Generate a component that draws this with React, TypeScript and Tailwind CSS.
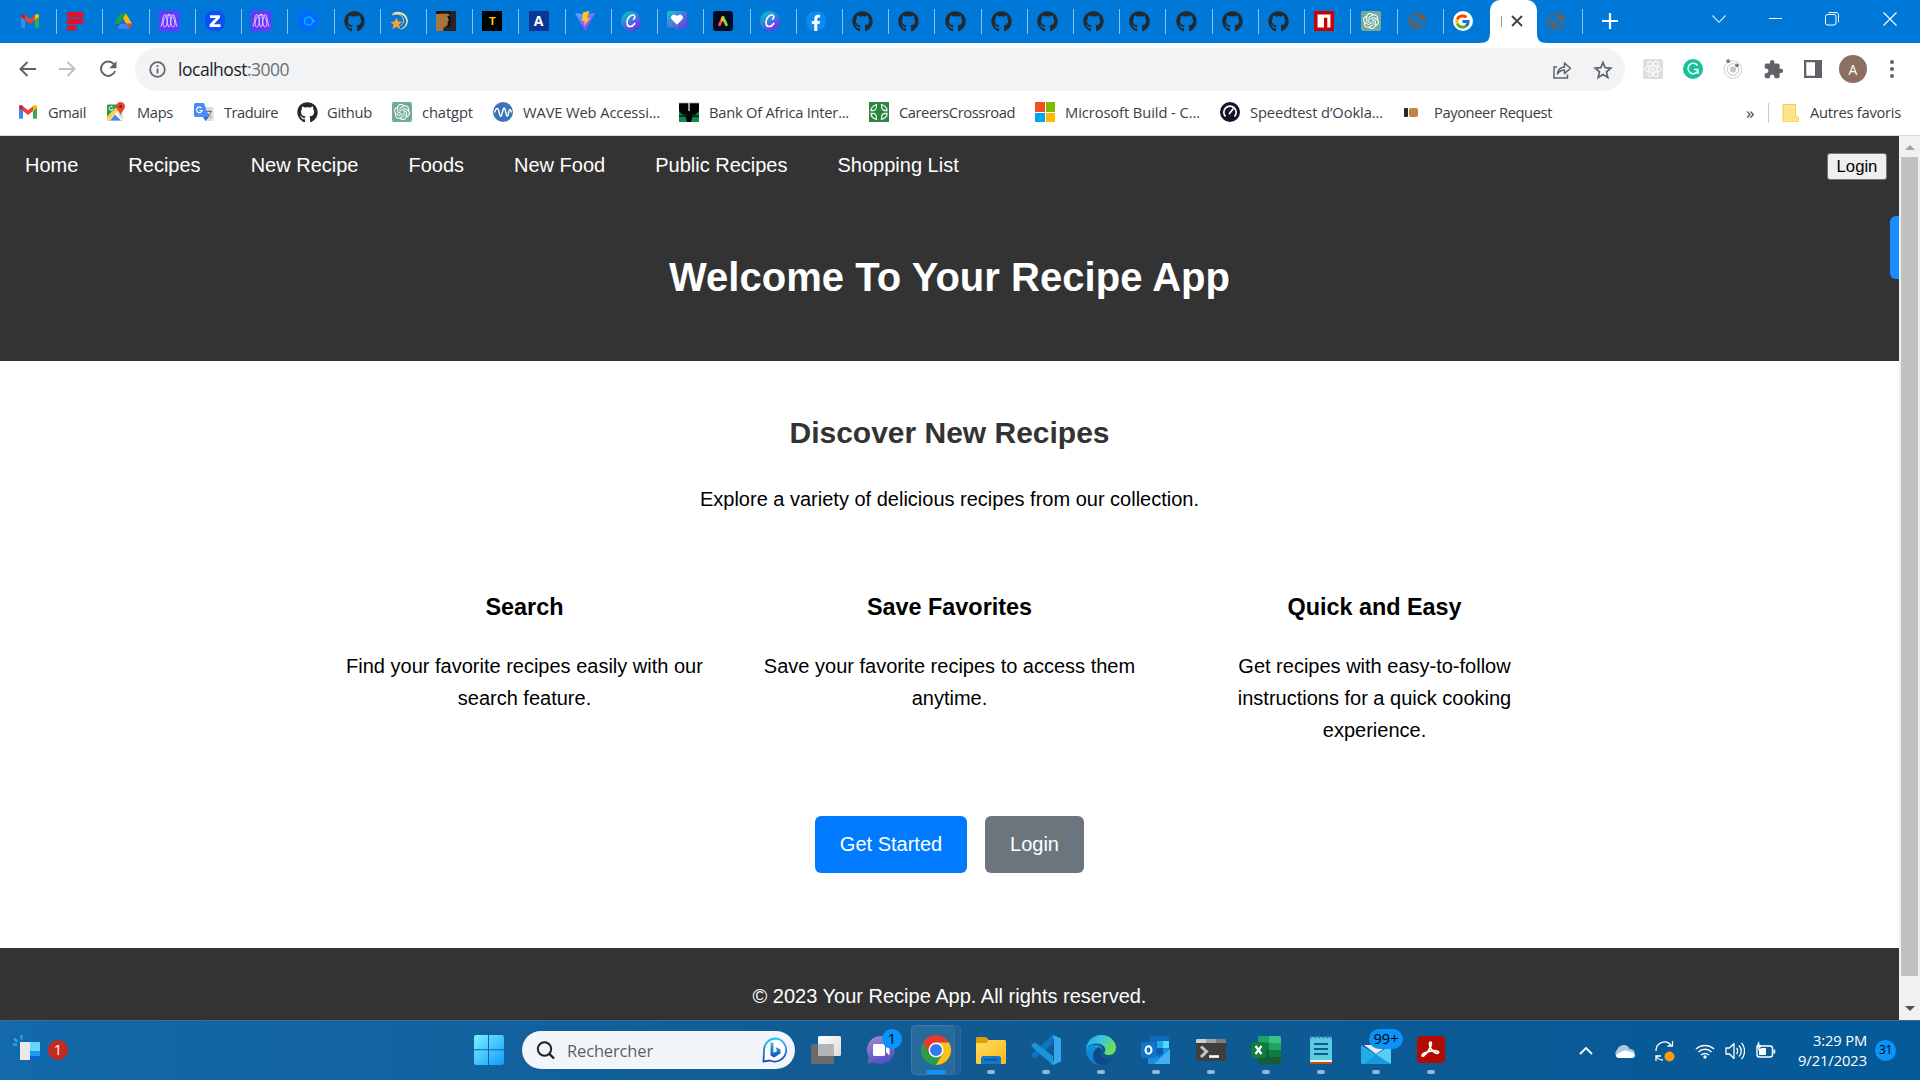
import React, { useLayoutEffect, useRef, useState } from "react";
import { FcGoogle } from "react-icons/fc";
import { SiOpenai } from "react-icons/si";
import { FaGithub } from "react-icons/fa";
import { MdExtension } from "react-icons/md";

/* Label whose letter spacing is adjusted so that it fills a given width. */
function Fit({ w, className = "", children }: { w: number; className?: string; children: string }) {
  const ref = useRef<HTMLSpanElement>(null);
  const [ls, setLs] = useState(0);
  useLayoutEffect(() => {
    if (ref.current) {
      const natural = ref.current.getBoundingClientRect().width;
      setLs((w - natural) / children.length);
    }
  }, []);
  return (
    <span ref={ref} className={"inline-block whitespace-pre " + className} style={{ letterSpacing: ls }}>
      {children}
    </span>
  );
}

const svg = "block w-5 h-5 shrink-0";

const Gmail = () => (
  <svg viewBox="0 0 20 20" className={svg}>
    <path d="M1 5v10.500c0 .8.500 1.200 1.200 1.200H5V9z" fill="#4285f4" />
    <path d="M19 5v10.500c0 .8-.5 1.200-1.200 1.200H15V9z" fill="#34a853" />
    <path d="M15 9l4-3.200V5c0-1.700-1.800-2.400-3-1.500L15 4.300z" fill="#fbbc04" />
    <path d="M5 9L1 5.800V5c0-1.700 1.800-2.400 3-1.500l1 .8z" fill="#c5221f" />
    <path d="M5 4.300l5 3.900 5-3.900V9l-5 3.900L5 9z" fill="#ea4335" />
  </svg>
);
const Feed = () => (
  <svg viewBox="0 0 20 20" className={svg}>
    <rect x="1" y="1" width="16.500" height="5.600" rx="1.200" fill="#e0112d" />
    <rect x="1" y="7.400" width="16.500" height="5.600" rx="1.200" fill="#e0112d" />
    <rect x="1" y="14" width="9.500" height="5.600" rx="1.200" fill="#e0112d" />
  </svg>
);
const Drive = () => (
  <svg viewBox="0 0 20 20" className={svg}>
    <path d="M7 2.500h6L10 7.800 4 17.800 1 12.800z" fill="#1e9e4e" />
    <path d="M13 2.500l6 10.300h-6L10 7.600z" fill="#ffba00" />
    <path d="M7 12.800h12l-3 5H4z" fill="#4285f4" />
    <path d="M13 12.800h6l-3 5z" fill="#ea4335" />
    <path d="M10 7.800l3 5H7z" fill="#0078d7" />
    <path d="M1 12.800L4 17.800l3-5z" fill="#1967d2" />
  </svg>
);
const Meta = () => (
  <svg viewBox="0 0 20 20" className={svg}>
    <rect width="20" height="20" fill="#6a35ff" />
    <g fill="none" stroke="#d9ccff" strokeWidth="1">
      <path d="M1.500 15.500C3.500 16 3.300 3.500 5.800 3.500S8 16 10 16s1.800-12.500 4.200-12.500 2.300 12.500 4.300 12" />
      <path d="M5.800 16c-3.500 0-1.500-12.500 4.200-12.500S17.700 16 14.200 16s-2-12.500-4.200-12.500S9.300 16 5.800 16z" />
    </g>
  </svg>
);
const Zed = () => (
  <svg viewBox="0 0 20 20" className={svg}>
    <rect width="20" height="20" rx="7.500" fill="#0b50f5" />
    <path d="M5 4.300h10v2.500L8.800 13.300H15.500V16H4.600v-2.600l6.200-6.400H5z" fill="#fff" />
  </svg>
);
const Clock = () => (
  <svg viewBox="0 0 20 20" className={svg}>
    <circle cx="10" cy="10" r="10" fill="#0069ff" />
    <path d="M14.200 7.500C12.500 5.700 9.500 5.500 7.700 7.200 6 9 6 11.300 7.700 12.900c1.800 1.700 4.800 1.500 6.500-.3M14.200 7.500v1.500l2.300 1-2.300 1v1.600" fill="none" stroke="#00c2ff" strokeWidth="1.300" />
  </svg>
);
const Git = () => <FaGithub className="block w-[21px] h-[21px] -mr-px shrink-0 text-[#24292f]" />;
const Dizzy = () => (
  <svg viewBox="0 0 20 20" className={svg}>
    <path d="M1.500 4C3.500-.3 11-.5 15 3.500c4.500 4.500 3.500 11-1.500 14-1.500.8-3 1-4 1 5-2 8-6.500 6.200-10.500C13.500 3 9 2 1.500 4z" fill="#f2dfa9" />
    <path d="M2.500 4C7 2 13 4 13.600 9c.3 2.500-.8 4.500-3 5.500" fill="none" stroke="#e8cc80" strokeWidth="1" />
    <path d="M6.500 6.500l1.600 4 4.400.3-3.400 2.800 1.300 4.700-4-2.500-4 2.500 1.200-4.700L.2 11l4.500-.4z" fill="#ff9d2e" />
  </svg>
);
const Face = () => (
  <svg viewBox="0 0 20 20" className={svg}>
    <rect width="20" height="20" fill="#2a2522" />
    <path d="M0 1.500h12l1.500 3-1.500 1 1 3.500-1.500 2 .5 4-4 1L7 20H0z" fill="#a87440" />
    <path d="M0 0h14v3l-4-.5-10 .5z" fill="#17100c" />
    <path d="M12 5l2 3-1 6-2 2" fill="none" stroke="#0f0b09" strokeWidth="2" />
  </svg>
);
const Tee = () => (
  <span className="flex w-5 h-5 items-center justify-center bg-black text-[#ffd200] font-['Liberation_Sans'] font-bold text-[11px] leading-none">T</span>
);
const Ay = () => (
  <span className="flex w-5 h-5 items-center justify-center bg-[#0c3594] text-white font-['Open_Sans'] font-bold text-[14px] leading-none">A</span>
);
const Vite = () => (
  <svg viewBox="0 0 20 20" className={svg}>
    <defs><linearGradient id="vt" x1="0" y1="0" x2=".7" y2="1"><stop stopColor="#41b8ff" /><stop offset=".7" stopColor="#a050fe" /><stop offset="1" stopColor="#bd34fe" /></linearGradient></defs>
    <path d="M0 2l10 1.500L20 2 10.300 20z" fill="url(#vt)" />
    <path d="M14.500 0L8 1.300 6.800 10h3L9 15l6-8-3 .3z" fill="#ffc51f" />
  </svg>
);
const Canva = () => (
  <svg viewBox="0 0 20 20" className={svg}>
    <defs><linearGradient id="cv" x1=".1" y1=".1" x2=".7" y2="1"><stop stopColor="#00c4cc" /><stop offset=".5" stopColor="#3f78df" /><stop offset="1" stopColor="#7d2ae8" /></linearGradient></defs>
    <circle cx="10" cy="10" r="10" fill="url(#cv)" />
    <path d="M12.500 8.300c2-1.300 1.700-4.300-.7-4.300C8 4 5.300 9.500 6.200 13c.8 3.500 5 3.500 7.500-.5" fill="none" stroke="#fff" strokeWidth="1.600" strokeLinecap="round" />
  </svg>
);
const Heart = () => (
  <svg viewBox="0 0 20 20" className={svg}>
    <defs><linearGradient id="hr" x1="0" y1="0" x2="1" y2="1"><stop stopColor="#17c3d0" /><stop offset=".5" stopColor="#4b78dd" /><stop offset="1" stopColor="#8a1fe8" /></linearGradient></defs>
    <path d="M2 0h16a2 2 0 0 1 2 2v12.500a2 2 0 0 1-2 2h-5L10 20l-3-3.500H2a2 2 0 0 1-2-2V2a2 2 0 0 1 2-2z" fill="url(#hr)" />
    <path d="M10 13.800L4.800 8.500C2.500 5.500 6 1.500 10 5c4-3.500 7.500.5 5.200 3.500z" fill="#fff" />
  </svg>
);
const Adobe = () => (
  <svg viewBox="0 0 20 20" className={svg}>
    <defs><linearGradient id="ad" gradientUnits="userSpaceOnUse" x1="5" y1="13" x2="15" y2="9"><stop stopColor="#ff2fd0" /><stop offset=".3" stopColor="#ff4a1c" /><stop offset=".55" stopColor="#ffd01c" /><stop offset=".8" stopColor="#3fd45a" /><stop offset="1" stopColor="#2176ff" /></linearGradient></defs>
    <rect width="20" height="20" rx="3" fill="#000b1d" />
    <path d="M6.500 13.800L10 6.200l3.500 7.600" fill="none" stroke="url(#ad)" strokeWidth="2.800" strokeLinejoin="round" strokeLinecap="round" />
  </svg>
);
const Facebook = () => (
  <svg viewBox="0 0 20 20" className={svg}>
    <circle cx="10" cy="10" r="10" fill="#0d8bf2" />
    <path d="M8.300 20v-7H5.800v-3h2.500V7.500C8.300 5 9.800 3.800 12 3.800c1 0 2 .2 2 .2v2.400h-1.200c-1.200 0-1.500.7-1.500 1.500V10H14l-.5 3h-2.200v7z" fill="#fff" />
  </svg>
);
const Npm = () => (
  <svg viewBox="0 0 20 20" className={svg}>
    <rect width="20" height="20" fill="#c00" />
    <path d="M3.500 3.500h13v13h-3.200V6.800H10v9.700H3.500z" fill="#fff" />
  </svg>
);
const Gpt = () => (
  <span className="flex w-5 h-5 items-center justify-center rounded-[2px] bg-[#74aa9c] text-white"><SiOpenai className="w-4 h-4" /></span>
);
const Globe = () => (
  <svg viewBox="0 0 20 20" className={svg}>
    <circle cx="10" cy="10" r="8" fill="none" stroke="#5f6368" strokeWidth="1.700" />
    <path d="M2.500 8c2 2 4.500 1 5.500 2.500s4 1 4 3-2.500 2.500-2.800 5C6 17.500 7.500 15 6 13.500S2 12 2 10zM10 2c-1 2 1.500 2 .5 3.500S9 8 11 8.500s2 2 3.500 2 2-1 3.500 0C18.500 5 15 2 10 2z" fill="#5f6368" />
  </svg>
);
const GWhite = () => (
  <span className="flex w-5 h-5 items-center justify-center rounded-full bg-white"><FcGoogle className="w-[17px] h-[17px]" /></span>
);

const tabs = [
  Gmail, Feed, Drive, Meta, Zed, Meta, Clock, Git, Dizzy, Face, Tee, Ay, Vite, Canva, Heart, Adobe, Canva, Facebook,
  Git, Git, Git, Git, Git, Git, Git, Git, Git, Git, Npm, Gpt, Globe, GWhite,
];

function TabStrip() {
  return (
    <div className="flex h-[43px] bg-[#0078d7] pl-[11px]">
      {tabs.map((Icon, i) => (
        <div key={i} className="flex w-[46.220px] shrink-0 items-center pb-px pl-[9.200px]">
          <Icon />
          {i < 31 && <span className="ml-auto mt-px w-px h-[25px] bg-[#8cc3ee]" />}
        </div>
      ))}
      <div className="relative flex w-[47px] shrink-0 items-center rounded-t-[10px] bg-white pb-px">
        <svg viewBox="0 0 10 10" className="absolute -left-[10px] bottom-0 w-[10px] h-[10px]"><path d="M10 0v10H0C7 10 10 7 10 0z" fill="#fff" /></svg>
        <svg viewBox="0 0 10 10" className="absolute -right-[10px] bottom-0 w-[10px] h-[10px]"><path d="M0 0v10h10C3 10 0 7 0 0z" fill="#fff" /></svg>
        <span className="ml-[11px] w-px h-[11px] bg-[#9a9a9a]" />
        <svg viewBox="0 0 12 12" className="ml-[9px] w-3 h-3"><path d="M1 1l10 10M11 1L1 11" stroke="#3c4043" strokeWidth="1.800" /></svg>
      </div>
      <div className="flex w-[46px] shrink-0 items-center pb-px pl-[9px]">
        <Globe />
        <span className="ml-auto w-px h-[25px] bg-[#8cc3ee]" />
      </div>
      <svg viewBox="0 0 16 16" className="ml-[19px] mt-[13px] w-4 h-4"><path d="M8 0v16M0 8h16" stroke="#fff" strokeWidth="2.200" /></svg>
      <svg viewBox="0 0 14 8" className="ml-[94px] mt-[15px] w-[14px] h-2"><path d="M.5.5L7 7.300 13.500.5" fill="none" stroke="#d8eafa" strokeWidth="1.100" /></svg>
      <span className="ml-[43px] mt-[18px] w-[13px] h-px bg-white" />
      <svg viewBox="0 0 14 14" className="ml-[43px] mt-[12px] w-[14px] h-[14px]"><rect x=".5" y="2.500" width="10.500" height="10.500" rx="2" fill="none" stroke="#fff" /><path d="M3.500.6H11c1.500 0 2.500 1 2.500 2.500v7" fill="none" stroke="#fff" /></svg>
      <svg viewBox="0 0 14 14" className="ml-[44px] mt-[12px] w-[14px] h-[14px]"><path d="M.5.5l13 13M13.500.5l-13 13" stroke="#fff" strokeWidth="1.100" /></svg>
    </div>
  );
}

const Atom = () => (
  <svg viewBox="0 0 20 20" className={svg}>
    <rect width="20" height="20" rx="2" fill="#dedede" />
    <g fill="none" stroke="#fff" strokeWidth=".9">
      <ellipse cx="10" cy="10" rx="8.500" ry="3.300" />
      <ellipse cx="10" cy="10" rx="8.500" ry="3.300" transform="rotate(60 10 10)" />
      <ellipse cx="10" cy="10" rx="8.500" ry="3.300" transform="rotate(120 10 10)" />
    </g>
    <circle cx="10" cy="10" r="1.500" fill="#fff" />
  </svg>
);

function Toolbar() {
  return (
    <div className="flex h-[53px] items-center font-['Open_Sans']">
      <svg viewBox="0 0 17 16" className="ml-[19px] -mt-[2px] w-[17px] h-4"><path d="M17 8H2M8.500 1L1.500 8l7 7" fill="none" stroke="#5f6368" strokeWidth="2" /></svg>
      <svg viewBox="0 0 17 16" className="ml-[23px] -mt-[2px] w-[17px] h-4"><path d="M0 8h15M8.500 1l7 7-7 7" fill="none" stroke="#bdc1c6" strokeWidth="2" /></svg>
      <svg viewBox="0 0 18 18" className="ml-[23px] -mt-px w-[18px] h-[18px]"><path d="M14.800 4.200A7.200 7.200 0 1 0 16 11" fill="none" stroke="#5f6368" strokeWidth="2" /><path d="M17.500 1v7.300h-7.300z" fill="#5f6368" /></svg>
      <div className="ml-[18px] flex h-[43px] w-[1490px] shrink-0 items-center rounded-full bg-[#f1f3f4] pl-[14px]">
        <svg viewBox="0 0 17 17" className="w-[17px] h-[17px]"><circle cx="8.500" cy="8.500" r="7.300" fill="none" stroke="#5f6368" strokeWidth="1.700" /><path d="M8.500 7.500v5M8.500 4.200v1.900" stroke="#5f6368" strokeWidth="1.800" /></svg>
        <Fit w={69} className="ml-[12px] text-[17.500px] text-[#202124]">localhost</Fit>
        <Fit w={42} className="text-[17.500px] text-[#6b6f74]">:3000</Fit>
        <svg viewBox="0 0 19 18" className="ml-auto w-[19px] h-[18px]"><path d="M4 6H1v11h13.500v-3.500" fill="none" stroke="#5f6368" strokeWidth="1.500" /><path d="M4.500 13c.3-4.500 3-6.700 7-7V2l6 5.300-6 5.300V9c-3.500 0-5.500 1.500-7 4z" fill="none" stroke="#5f6368" strokeWidth="1.500" strokeLinejoin="round" /></svg>
        <svg viewBox="0 0 20 20" className="ml-[21px] mr-[12px] w-5 h-5"><path d="M10 2.500l2.200 5.200 5.600.5-4.300 3.700 1.300 5.500L10 14.500l-4.800 2.900 1.300-5.500-4.300-3.700 5.600-.5z" fill="none" stroke="#5f6368" strokeWidth="1.700" /></svg>
      </div>
      <div className="-mt-px flex grow items-center pl-[18px]">
        <Atom />
        <span className="ml-5 flex w-5 h-5 items-center justify-center rounded-full bg-[#15c39a]">
          <svg viewBox="0 0 14 14" className="w-[14px] h-[14px]"><path d="M11.500 3.500A5.200 5.200 0 1 0 12 8.500M12.500 7.500H8M12 7.500V12" fill="none" stroke="#fff" strokeWidth="1.500" /></svg>
        </span>
        <svg viewBox="0 0 20 20" className="ml-5 w-5 h-5"><circle cx="10" cy="10.500" r="8.800" fill="none" stroke="#cfcfcf" /><circle cx="10" cy="10.500" r="5.800" fill="none" stroke="#c4c4c4" /><circle cx="10" cy="10.500" r="3" fill="#c4c4c4" /><circle cx="5.200" cy="2.200" r="1.900" fill="#777" /><circle cx="14" cy="6.300" r="1.900" fill="#777" /></svg>
        <MdExtension className="ml-[20px] w-[21px] h-[21px] text-[#5f6368]" />
        <svg viewBox="0 0 18 18" className="ml-5 w-[18px] h-[18px]"><path d="M0 0h18v18H0zM2.300 2.300v13.400h8.700V2.300z" fill="#5f6368" fillRule="evenodd" /></svg>
        <span className="ml-[17px] flex w-[28px] h-[28px] items-center justify-center rounded-full bg-[#8d6e63] text-white text-[14px]">A</span>
        <span className="ml-[23px] flex flex-col gap-[3px]">
          <i className="w-1 h-1 rounded-full bg-[#5f6368]" /><i className="w-1 h-1 rounded-full bg-[#5f6368]" /><i className="w-1 h-1 rounded-full bg-[#5f6368]" />
        </span>
      </div>
    </div>
  );
}

const MapsI = () => (
  <svg viewBox="0 0 20 20" className={svg}>
    <rect x="0" y="2.500" width="16" height="16" rx="1" fill="#2a9d57" />
    <path d="M0 17.500L14 3.500l2 3.500v11.500H1z" fill="#fff" />
    <path d="M0 14.500L11.500 3l2.500 2.500L2 18.500H0z" fill="#ffd04c" />
    <path d="M3 18.500l5-6 6 6z" fill="#4285f4" />
    <path d="M9.500 11.500l6.500 6.500V8z" fill="#dedede" />
    <path d="M13.500 0A4.500 4.500 0 0 1 18 4.500c0 3-3.500 4.500-4.500 9-1-4.500-4.500-6-4.500-9A4.500 4.500 0 0 1 13.500 0z" fill="#ea4335" />
    <circle cx="13.500" cy="4.500" r="1.500" fill="#8b1a14" />
    <path d="M5.500 5A2 2 0 1 0 6 7.200H4.300" fill="none" stroke="#fff" strokeWidth=".9" />
  </svg>
);
const Traduire = () => (
  <svg viewBox="0 0 20 20" className={svg}>
    <path d="M7 5h11a1.500 1.500 0 0 1 1.500 1.500v11A1.500 1.500 0 0 1 18 19h-6z" fill="#dcdcdc" />
    <path d="M1.500 1H10l5 14H1.500A1.500 1.500 0 0 1 0 13.500v-11A1.500 1.500 0 0 1 1.500 1z" fill="#4c8bf5" />
    <path d="M9 15h6l-3.500 4z" fill="#3367d6" />
    <path d="M7.500 6A2.800 2.800 0 1 0 8.100 8.500H5.500" fill="none" stroke="#fff" strokeWidth="1.200" />
    <path d="M12.500 9.500H18M15.300 8v1.500M17 9.500c-.5 2-2 4-3 5M14 11.500c1 2 2 3 3.500 4" fill="none" stroke="#607988" />
  </svg>
);
const Wave = () => (
  <svg viewBox="0 0 20 20" className={svg}>
    <circle cx="10" cy="10" r="10" fill="#3f73b7" />
    <path d="M1.500 10.500C3 5.500 4.700 5.500 5.700 8.500l1.200 4.500c.5 1.600 1.200 1.600 1.700 0l1.700-6c.5-1.500 1.200-1.500 1.700 0l1.500 6c.5 1.500 1.100 1.500 1.600 0l.6-3c.8-3.500 1.800-3.500 2.800.5" fill="none" stroke="#fff" strokeWidth="1.400" />
  </svg>
);
const Boa = () => (
  <svg viewBox="0 0 20 20" className={svg}>
    <rect width="20" height="20" fill="#050505" />
    <path d="M0 0h20v1.200H0zM9.300 1.200h1.400V9H9.300z" fill="#e0e0e0" />
    <path d="M0 4.500c1 5 3.500 8 8 9H0zM20 4.500c-1 5-3.500 8-8 9h8zM0 14.800h6.500L8 20H0zM13.500 14.800H20V20h-8z" fill="#0f8a4d" />
    <path d="M0 4.500c1 4 2.500 6 5 7.500M20 4.500c-1 4-2.500 6-5 7.500" fill="none" stroke="#050505" strokeWidth="3" />
  </svg>
);
const Careers = () => (
  <svg viewBox="0 0 20 20" className={svg}>
    <rect width="20" height="20" fill="#2b8540" />
    <path d="M7.500 2.500C3 4 2 7 2 8.500h2.500C6.500 8.500 7.500 7 7.500 2.500zM7.500 17.500C3 16 2 13 2 11.500h2.500c2 0 3 1.500 3 6zM12.500 2.500c4.500 1.500 5.500 4.500 5.500 6h-2.500c-2 0-3-1.500-3-6zM12.500 17.500c4.500-1.500 5.500-4.500 5.500-6h-2.500c-2 0-3 1.500-3 6z" fill="none" stroke="#e8f5ea" strokeWidth="1.300" />
  </svg>
);
const Ms = () => (
  <span className="grid w-5 h-5 grid-cols-2 gap-px">
    <i className="bg-[#f25022]" /><i className="bg-[#7fba00]" /><i className="bg-[#00a4ef]" /><i className="bg-[#ffb900]" />
  </span>
);
const Speed = () => (
  <svg viewBox="0 0 20 20" className={svg}>
    <circle cx="10" cy="10" r="10" fill="#141526" />
    <path d="M5.500 14.500a6.200 6.200 0 1 1 9 0" fill="none" stroke="#fff" strokeWidth="1.700" />
    <path d="M9.500 11.500L13 7" stroke="#fff" strokeWidth="1.800" strokeLinecap="round" />
  </svg>
);
const Payo = () => (
  <span className="flex w-5 h-5 items-center gap-px"><i className="w-[4px] h-[9px] rounded-[1px] bg-[#26262b]" /><i className="w-[9px] h-[9px] rounded-[2px] bg-[#c4833e]" /></span>
);

/* icon, label, label width, total width up to the next bookmark */
const bookmarks: [React.FC, string, number, string][] = [
  [Gmail, "Gmail", 38, "w-[89px]"],
  [MapsI, "Maps", 36, "w-[87px]"],
  [Traduire, "Traduire", 54, "w-[103px]"],
  [Git, "Github", 45, "w-[95px]"],
  [Gpt, "chatgpt", 51, "w-[101px]"],
  [Wave, "WAVE Web Accessi...", 137, "w-[186px]"],
  [Boa, "Bank Of Africa Inter...", 140, "w-[190px]"],
  [Careers, "CareersCrossroad", 116, "w-[166px]"],
  [Ms, "Microsoft Build - C...", 135, "w-[185px]"],
  [Speed, "Speedtest d’Ookla...", 133, "w-[184px]"],
  [Payo, "Payoneer Request", 118, "w-[300px]"],
];

function Bookmarks() {
  return (
    <div className="flex h-[40px] items-center border-b border-[#d6d8db] pb-[6px] pl-[18px] font-['Open_Sans'] text-[14.700px] text-[#3c4043]">
      {bookmarks.map(([Icon, label, w, cls]) => (
        <div key={label} className={"flex shrink-0 items-center " + cls}>
          <Icon />
          <Fit w={w} className="ml-[10px]">{label}</Fit>
        </div>
      ))}
      <span className="ml-[42px] w-[22px] text-[17px] leading-none">»</span>
      <span className="h-5 w-px bg-[#c8cacd]" />
      <svg viewBox="0 0 17 18" className="ml-[13px] w-[17px] h-[18px]"><path d="M1 .5h12.500v12l3 1v3.500l-1 .8H1z" fill="#ffe48a" stroke="#f2cf55" /></svg>
      <Fit w={91} className="ml-[11px]">Autres favoris</Fit>
    </div>
  );
}

const nav = ["Home", "Recipes", "New Recipe", "Foods", "New Food", "Public Recipes", "Shopping List"];
const features: [string, number, string][] = [
  ["Search", 78, "Find your favorite recipes easily with our search feature."],
  ["Save Favorites", 165, "Save your favorite recipes to access them anytime."],
  ["Quick and Easy", 174, "Get recipes with easy-to-follow instructions for a quick cooking experience."],
];

function Page() {
  return (
    <div className="flex h-[884px] font-['Liberation_Sans',sans-serif] text-[20px]">
      <div className="w-[1899px] bg-white text-black">
        <header className="relative h-[225px] bg-[#333] text-white">
          <div className="flex items-start">
            <nav className="flex gap-[50px] pl-[25px] pt-[13px] leading-[32px]">
              {nav.map((n) => <a key={n}>{n}</a>)}
            </nav>
            <button className="ml-auto mr-[12px] mt-[17px] h-[27px] w-[60px] rounded-[3px] border border-[#767676] bg-[#efefef] pt-px text-[16.670px] leading-none text-black">Login</button>
          </div>
          <h1 className="mt-[64px] text-center text-[40px] font-bold leading-[64px]"><Fit w={561}>Welcome To Your Recipe App</Fit></h1>
          <span className="absolute right-0 top-[80px] h-[63px] w-[9px] rounded-l-[6px] bg-[#1a8cff]" />
        </header>
        <main className="flex h-[587px] flex-col items-center text-center">
          <h2 className="mt-[48px] text-[30px] font-bold leading-[48px] text-[#333]"><Fit w={320}>Discover New Recipes</Fit></h2>
          <p className="mt-[26px] leading-[32px]">Explore a variety of delicious recipes from our collection.</p>
          <div className="mt-[73px] grid grid-cols-[375px_375px_375px] gap-[50px]">
            {features.map(([t, w, d]) => (
              <section key={t}>
                <h3 className="text-[23.400px] font-bold leading-[38px]"><Fit w={w}>{t}</Fit></h3>
                <p className="mt-[24px] leading-[32px]">{d}</p>
              </section>
            ))}
          </div>
          <div className="mt-[70px] flex gap-[18px] text-white">
            <button className="h-[57px] w-[152px] rounded-[6px] bg-[#007bff] pb-px">Get Started</button>
            <button className="h-[57px] w-[99px] rounded-[6px] bg-[#6c757d] pb-px">Login</button>
          </div>
        </main>
        <footer className="h-[72px] bg-[#333] pt-[32px] text-center leading-[32px] text-white">© 2023 Your Recipe App. All rights reserved.</footer>
      </div>
      <div className="flex w-[21px] flex-col items-center bg-[#f1f1f1]">
        <svg viewBox="0 0 10 5" className="mt-[9px] w-[10px] h-[5px]"><path d="M5 0l5 5H0z" fill="#a3a3a3" /></svg>
        <div className="mt-[7px] h-[819px] w-[17px] bg-[#c1c1c1]" />
        <svg viewBox="0 0 10 5" className="mt-auto mb-[9px] w-[10px] h-[5px]"><path d="M5 5l5-5H0z" fill="#505050" /></svg>
      </div>
    </div>
  );
}

const big = "block w-[32px] h-[32px]";
const TaskView = () => (
  <svg viewBox="0 0 32 32" className={big}>
    <defs><linearGradient id="tv" x1="0" y1="0" x2="1" y2="1"><stop stopColor="#fff" /><stop offset="1" stopColor="#dcdcdc" /></linearGradient></defs>
    <rect x="1" y="10" width="23" height="20" rx="1.500" fill="#6a6a6a" />
    <rect x="8" y="2" width="23" height="20" rx="1.500" fill="url(#tv)" />
    <path d="M8 10h14.500a1.500 1.500 0 0 1 1.500 1.500V22H9.500A1.500 1.500 0 0 1 8 20.500z" fill="#b5b5b5" />
  </svg>
);
const Chat = () => (
  <svg viewBox="0 0 32 32" className={big}>
    <defs><linearGradient id="ch" x1="0" y1="0" x2=".4" y2="1"><stop stopColor="#a58bc8" /><stop offset="1" stopColor="#5651c4" /></linearGradient></defs>
    <path d="M16 2a14 14 0 1 1-6.500 26.500L2.500 30l1.300-7A14 14 0 0 1 16 2z" fill="url(#ch)" />
    <rect x="8" y="10" width="12" height="12" rx="1.500" fill="#fff" /><path d="M21 14l3.500-3.500v11L21 18z" fill="#fff" />
  </svg>
);
const Chrome = () => (
  <svg viewBox="0 0 32 32" className={big}>
    <path d="M16 1A15 15 0 0 1 29 8.500H16L9.500 19.700 3 8.500A15 15 0 0 1 16 1z" fill="#e8392c" />
    <path d="M3 8.500L9.500 19.700 22.500 19.700 16 31A15 15 0 0 1 3 8.500z" fill="#2a9d49" />
    <path d="M29 8.500A15 15 0 0 1 16 31l6.500-11.300L16 8.500z" fill="#fbc116" />
    <circle cx="16" cy="16" r="7.500" fill="#fff" /><circle cx="16" cy="16" r="6" fill="#2f7af0" />
  </svg>
);
const Folder = () => (
  <svg viewBox="0 0 32 32" className={big}>
    <defs><linearGradient id="fo" x1="0" y1="0" x2="1" y2="1"><stop stopColor="#ffdb60" /><stop offset="1" stopColor="#fdbb1e" /></linearGradient></defs>
    <path d="M1 4.500C1 3.600 1.600 3 2.500 3H10c1 0 1.500.5 2 1l2.500 2.500L11 12H1z" fill="#e09d05" />
    <path d="M1 9h9c1 0 2-.5 2.500-1.500.7-1 1-1.500 2-1.500h15c.9 0 1.500.6 1.500 1.500v21c0 1-.7 1.500-1.500 1.500h-27C1.600 30 1 29.500 1 28.500z" fill="url(#fo)" />
    <path d="M6 30v-5.500A2.500 2.500 0 0 1 8.500 22h15a2.500 2.500 0 0 1 2.500 2.500V30z" fill="#1478cb" /><path d="M9.500 25.700h13" stroke="#0b4f91" strokeWidth="1.500" />
  </svg>
);
const Code = () => (
  <svg viewBox="0 0 32 32" className={big}>
    <path d="M23 1L31 4.500v23L23 31l-2-1.500L24 27V5l-3-2.500z" fill="#35a7ee" />
    <path d="M21 2.500L23 1v9L5 24.300 1.500 22v-2z" fill="#0f75bd" />
    <path d="M21 29.500l2 1.500v-9L5 8.500 1.500 10.500v2z" fill="#1b93dc" />
  </svg>
);
const Edge = () => (
  <svg viewBox="0 0 32 32" className={big}>
    <defs>
      <linearGradient id="e1" x1="0" y1="0" x2="1" y2=".4"><stop stopColor="#1fa6e6" /><stop offset=".5" stopColor="#35c6df" /><stop offset="1" stopColor="#70e055" /></linearGradient>
      <linearGradient id="e2" x1="0" y1="0" x2="0" y2="1"><stop stopColor="#1593dd" /><stop offset="1" stopColor="#1279d3" /></linearGradient>
    </defs>
    <path d="M1 15a15 15 0 0 0 16 16c-3-1-5-4-4.500-8 .3-2.500 1.500-4.500 3.500-6 2-1.500 1-6-5-6-5 0-9 1-10 4z" fill="url(#e2)" />
    <path d="M14 13c-5 2-7 7-5.500 11.500C10 29 14 31.300 18 31c4.500-.5 8.500-2.800 10.500-6.500.3-.7-.3-1-1-.6-4 2-9 1-11-2.400-1.200-2-.8-4 .3-5.500z" fill="#114a8b" />
    <path d="M1 15C2 6.500 8.500 1 16 1c9 0 15 6.500 15 12.500C31 18 28 21 24 21c-3.500 0-5.500-1.200-4.500-2.500C22 15 19 9.500 12 9.500 6.500 9.500 2 12 1 15z" fill="url(#e1)" />
  </svg>
);
const Outlook = () => (
  <svg viewBox="0 0 32 32" className={big}>
    <rect x="9" y="2" width="20" height="20" rx="1.500" fill="#1269b8" /><path d="M17 7h6v7h-6z" fill="#28a8ea" /><path d="M23 7h6v7h-6z" fill="#50d9ff" /><path d="M17 14h6v6h-6z" fill="#0a5cab" /><path d="M23 14h6v6h-6z" fill="#1c8fe0" />
    <path d="M8 18l11 5 11-8v13.500c0 .9-.6 1.500-1.500 1.500h-19C8.600 30 8 29.400 8 28.500z" fill="#1d8de0" /><path d="M30 15L14 30h14.500c.9 0 1.500-.6 1.500-1.500z" fill="#3fb0f2" />
    <rect x="1" y="8" width="15" height="16" rx="1.500" fill="#0f74cb" /><ellipse cx="8.500" cy="16" rx="3" ry="3.700" fill="none" stroke="#fff" strokeWidth="2" />
  </svg>
);
const Terminal = () => (
  <svg viewBox="0 0 32 32" className={big}>
    <rect x="1" y="5" width="30" height="22" rx="2" fill="#3e3e3e" /><path d="M2.500 5H11v4H1V6.500C1 5.600 1.600 5 2.500 5z" fill="#cfcfcf" /><path d="M11 5h10v4H11z" fill="#a3a3a3" /><path d="M21 5h8.500c.9 0 1.500.6 1.500 1.500V9H21z" fill="#7c7c7c" />
    <path d="M6 12.500l5.500 5-5.500 5.500" fill="none" stroke="#c6c6c6" strokeWidth="3" /><path d="M14 22.500h10" stroke="#fff" strokeWidth="2.600" />
  </svg>
);
const Excel = () => (
  <svg viewBox="0 0 32 32" className={big}>
    <rect x="8" y="2" width="23" height="28" rx="1.500" fill="#185c37" /><path d="M8 3.500C8 2.600 8.600 2 9.500 2H19v7H8z" fill="#21a366" /><path d="M19 2h10.500c.9 0 1.500.6 1.500 1.500V9H19z" fill="#33c481" /><path d="M8 9h11v7H8z" fill="#107c41" /><path d="M19 9h12v7H19z" fill="#21a366" /><path d="M19 16h12v7H19z" fill="#107c41" />
    <rect x="1" y="8" width="15" height="16" rx="1.500" fill="#107c41" /><path d="M5.500 12l6 8M11.500 12l-6 8" stroke="#fff" strokeWidth="2.200" />
  </svg>
);
const Notepad = () => (
  <svg viewBox="0 0 32 32" className={big}>
    <rect x="5" y="26" width="22" height="4" rx="1" fill="#b4560f" /><rect x="5" y="25" width="22" height="3" fill="#f2f2f2" /><rect x="5" y="3" width="22" height="23" fill="#5acbe0" />
    <path d="M6.500 1.500v3M10.500 1.500v3M14.500 1.500v3M18.500 1.500v3M22.500 1.500v3M25.800 1.500v3" stroke="#2a7ea5" strokeWidth="1.500" />
    <path d="M9 10h14M9 15h14M9 20h14" stroke="#0d5c86" strokeWidth="1.800" />
  </svg>
);
const Mail = () => (
  <svg viewBox="0 0 32 32" className={big}>
    <path d="M1 11L10 5h12l9 6v4H1z" fill="#1057a5" /><path d="M4 11h25l-13 9z" fill="#e9eef2" /><path d="M1 11l30 19H2.500C1.600 30 1 29.400 1 28.500z" fill="#23aae8" /><path d="M31 11v17.500c0 .9-.6 1.500-1.500 1.500L16 20.500z" fill="#55cdf7" /><path d="M16 20.500L31 30H4z" fill="#1799df" />
  </svg>
);
const Acrobat = () => (
  <svg viewBox="0 0 32 32" className={big}>
    <rect x="2" y="2" width="28" height="27" rx="4" fill="#b30b00" />
    <path d="M15.500 8c2.500 0-.5 9-7 14-1.500 1-2.500-1 0-2.500 5-3 12-3.500 14.500-2 2 1.500-1 2.500-3.500 1C15 16 13 8 15.500 8z" fill="none" stroke="#fff" strokeWidth="1.700" />
  </svg>
);

const apps: { Icon: React.FC; run?: boolean; badge?: string }[] = [
  { Icon: TaskView }, { Icon: Chat, badge: "1" }, { Icon: Chrome }, { Icon: Folder, run: true }, { Icon: Code, run: true }, { Icon: Edge, run: true },
  { Icon: Outlook, run: true }, { Icon: Terminal, run: true }, { Icon: Excel, run: true }, { Icon: Notepad, run: true }, { Icon: Mail, run: true, badge: "99+" }, { Icon: Acrobat, run: true },
];

function Taskbar() {
  return (
    <div className="flex h-[60px] items-center border-t border-[#2f6e9f] bg-linear-to-r from-[#1369aa] via-[#115a91] to-[#045a99] font-['Open_Sans']">
      <svg viewBox="0 0 28 26" className="ml-[13px] w-7 h-[26px] -mt-[5px]">
        <path d="M0 9.500h4M1 3.500l3.500 3M8.500 0v4.500" stroke="#25a5e8" strokeWidth="2.400" />
        <rect x="7" y="7" width="10" height="18" fill="#e9e9ec" /><rect x="17" y="7" width="10" height="9" fill="#66d4fb" /><rect x="17" y="16" width="10" height="5" fill="#1b9cf0" /><rect x="17" y="21" width="10" height="4" fill="#0668c8" />
      </svg>
      <span className="ml-[7px] -mt-px flex w-5 h-5 items-center justify-center rounded-full bg-[#c42b1c] text-[14.500px] leading-none text-white">1</span>
      <svg viewBox="0 0 30 30" className="ml-[406px] -mt-px w-[30px] h-[30px]">
        <defs><linearGradient id="wn" x1="0" y1="0" x2="1" y2="1"><stop stopColor="#7df0ff" /><stop offset="1" stopColor="#0d9bff" /></linearGradient></defs>
        <path d="M1.500 0H14v14.300H0V1.500zM15 0h13.500L30 1.500v12.800H15zM0 15.300h14V30H1.500L0 28.500zM15 15.300h15v13.200L28.500 30H15z" fill="url(#wn)" />
      </svg>
      <div className="ml-[18px] -mt-px flex h-[38px] w-[273px] shrink-0 items-center rounded-full bg-[#f2f6fb] pl-[14px]">
        <svg viewBox="0 0 19 19" className="w-[19px] h-[19px]"><circle cx="8.500" cy="8" r="6.700" fill="none" stroke="#222" strokeWidth="2" /><path d="M13 12.500l5 5" stroke="#222" strokeWidth="2.400" /></svg>
        <Fit w={86} className="ml-[12px] mt-[2px] text-[16.500px] text-[#5c5f63]">Rechercher</Fit>
        <svg viewBox="0 0 26 26" className="ml-auto mr-[7px] w-[26px] h-[26px]">
          <defs><linearGradient id="bi" x1="0" y1="0" x2="0" y2="1"><stop stopColor="#32c2f5" /><stop offset="1" stopColor="#1b48ba" /></linearGradient></defs>
          <path d="M13 1.500A11.500 11.500 0 1 1 8 23.500l-6.500 1 .5-11.500A11.500 11.500 0 0 1 13 1.500z" fill="#fff" stroke="url(#bi)" strokeWidth="1.800" />
          <path d="M8.500 5l3 1.200v9.800l3.500-2-1.500-4 5 2.500v4L12 20.500l-3.500-2z" fill="url(#bi)" />
        </svg>
      </div>
      <div className="ml-[3px] flex">
        {apps.map(({ Icon, run, badge }, i) => (
          <div key={i} className="relative flex h-[59px] w-[55px] shrink-0 items-center justify-center pb-px">
            {i === 2 && <span className="absolute left-[3px] top-1 h-[50px] w-[50px] rounded-[5px] border border-white/5 bg-white/5" />}
            {i === 2 && <span className="absolute left-[3px] top-1 h-[50px] w-[44px] rounded-[5px] border border-white/5 bg-white/5" />}
            <span className="relative"><Icon /></span>
            {badge && (
              <span className={"absolute top-[8px] flex h-5 items-center justify-center rounded-full bg-[#0a93fb] text-[14.500px] leading-none text-black " + (badge === "1" ? "left-[29px] w-5" : "left-[21px] w-[34px]")}>{badge}</span>
            )}
            {run && <span className="absolute bottom-[6px] h-1 w-2 rounded-full bg-[#98b8d0]" />}
            {i === 2 && <span className="absolute bottom-[6px] h-1 w-5 rounded-full bg-[#0a93fb]" />}
          </div>
        ))}
      </div>
      <svg viewBox="0 0 14 8" className="ml-[121px] w-[14px] h-2"><path d="M1 7l6-6 6 6" fill="none" stroke="#fff" strokeWidth="1.800" /></svg>
      <svg viewBox="0 0 20 14" className="ml-[22px] w-5 h-[14px]"><path d="M2 13a4.500 4.500 0 0 1 0-7C4 0 13-1 14.500 5c5-.5 7 5 3 8z" fill="#a8c8e2" /><path d="M4 14c-2 0-3-1-3-2.500S9 6 11 6.500 20 9 20 11s-1.500 3-3 3z" fill="#fff" /></svg>
      <svg viewBox="0 0 22 22" className="ml-[19px] w-[22px] h-[22px]"><path d="M2 11a8.500 8.500 0 0 1 15-6M18.500 1v5h-5M2 21v-5h5M2.500 16.500C4 19 6.500 20 9 20" fill="none" stroke="#fff" strokeWidth="1.300" /><circle cx="15.500" cy="16.500" r="5" fill="#ff9a0c" /></svg>
      <svg viewBox="0 0 20 16" className="ml-[19px] w-5 h-4"><path d="M1 6a13 13 0 0 1 18 0M3.500 9a9.300 9.300 0 0 1 13 0M6 12a5.800 5.800 0 0 1 8 0" fill="none" stroke="#fff" strokeWidth="1.500" /><circle cx="10" cy="14" r="1.700" fill="#fff" /></svg>
      <svg viewBox="0 0 20 18" className="ml-[10px] w-5 h-[18px]"><path d="M1 6h3.500l4.500-4.500v15L4.500 12H1z" fill="none" stroke="#fff" strokeWidth="1.300" strokeLinejoin="round" /><path d="M11.500 6c1.500 1.500 1.500 4.500 0 6M14 3.500c3 3 3 8 0 11M16.500 1c4 4 4 12 0 16" fill="none" stroke="#fff" strokeWidth="1.300" /></svg>
      <svg viewBox="0 0 21 18" className="ml-[10px] -mt-[2px] w-[21px] h-[18px]"><rect x="2" y="5" width="15.500" height="11" rx="2.500" fill="none" stroke="#fff" strokeWidth="1.400" /><path d="M4 8l3-1h4v7H4zM18.500 8.500h1.700v4h-1.700z" fill="#fff" /><path d="M4 0L1 6h2.500L3 10l4-6H4.500z" fill="#fff" /></svg>
      <div className="-mt-[2px] ml-auto flex w-[76px] flex-col items-end text-[14.700px] leading-[20px] text-white">
        <Fit w={54}>3:29 PM</Fit>
        <Fit w={69}>9/21/2023</Fit>
      </div>
      <span className="ml-[8px] mr-[24px] -mt-px flex w-[21px] h-[21px] items-center justify-center rounded-full bg-[#0a93fb] text-[12px] leading-none tracking-tight text-black">31</span>
    </div>
  );
}

export default function App() {
  return (
    <div className="h-[1080px] w-[1920px] overflow-hidden bg-white">
      <TabStrip />
      <Toolbar />
      <Bookmarks />
      <Page />
      <Taskbar />
    </div>
  );
}
